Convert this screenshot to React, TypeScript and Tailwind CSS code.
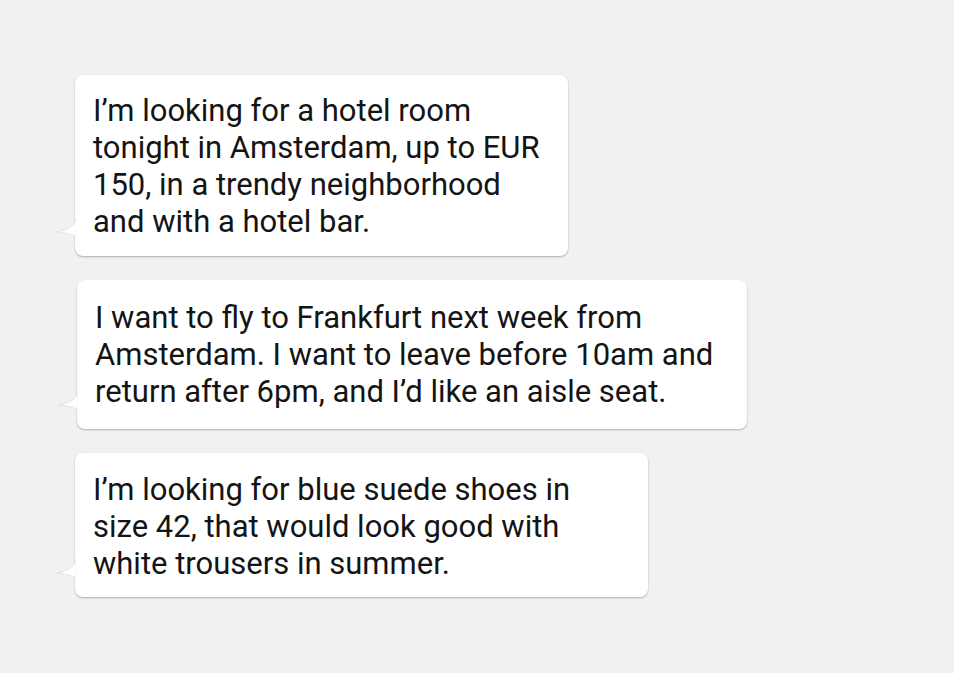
import React from 'react';

const messages = [
  {
    width: 'w-[493px]',
    offset: 'ml-[75px]',
    pad: 'pt-[17px] pb-[16px]',
    lines: ['I’m looking for a hotel room', 'tonight in Amsterdam, up to EUR', '150, in a trendy neighborhood', 'and with a hotel bar.'],
  },
  {
    width: 'w-[670px]',
    offset: 'ml-[77px]',
    pad: 'pt-[19px] pb-[19px]',
    lines: ['I want to fly to Frankfurt next week from', 'Amsterdam. I want to leave before 10am and', 'return after 6pm, and I’d like an aisle seat.'],
  },
  {
    width: 'w-[573px]',
    offset: 'ml-[75px]',
    pad: 'pt-[18px] pb-[15px]',
    lines: ['I’m looking for blue suede shoes in', 'size 42, that would look good with', 'white trousers in summer.'],
  },
];

const Tail = () => (
  <svg
    className="absolute -left-[19px] bottom-[18px]"
    width="22"
    height="20"
    viewBox="0 0 22 20"
  >
    <path d="M20 0 C19 8 12 12 1 14 C8 15 14 16 20 18 Z" fill="#ffffff" stroke="#d9d7d7" strokeWidth="0.6" />
    <rect x="19.6" y="-1" width="3" height="22" fill="#ffffff" />
  </svg>
);

export default function App() {
  return (
    <div className="w-[954px] h-[673px] bg-[#f2f0f0] pt-[75px] flex flex-col gap-[24px] font-['Roboto',sans-serif]">
      {messages.map((m, i) => (
        <div
          key={i}
          className={`relative ${m.width} ${m.offset} ${m.pad} bg-white rounded-[8px] pl-[18px] pr-4 shadow-[0_1px_2px_rgba(0,0,0,0.28)]`}
        >
          <Tail />
          <div className="text-[31px] leading-[37px] text-[#141414]">
            {m.lines.map((l, j) => (
              <div key={j} className="whitespace-nowrap">{l}</div>
            ))}
          </div>
        </div>
      ))}
    </div>
  );
}
